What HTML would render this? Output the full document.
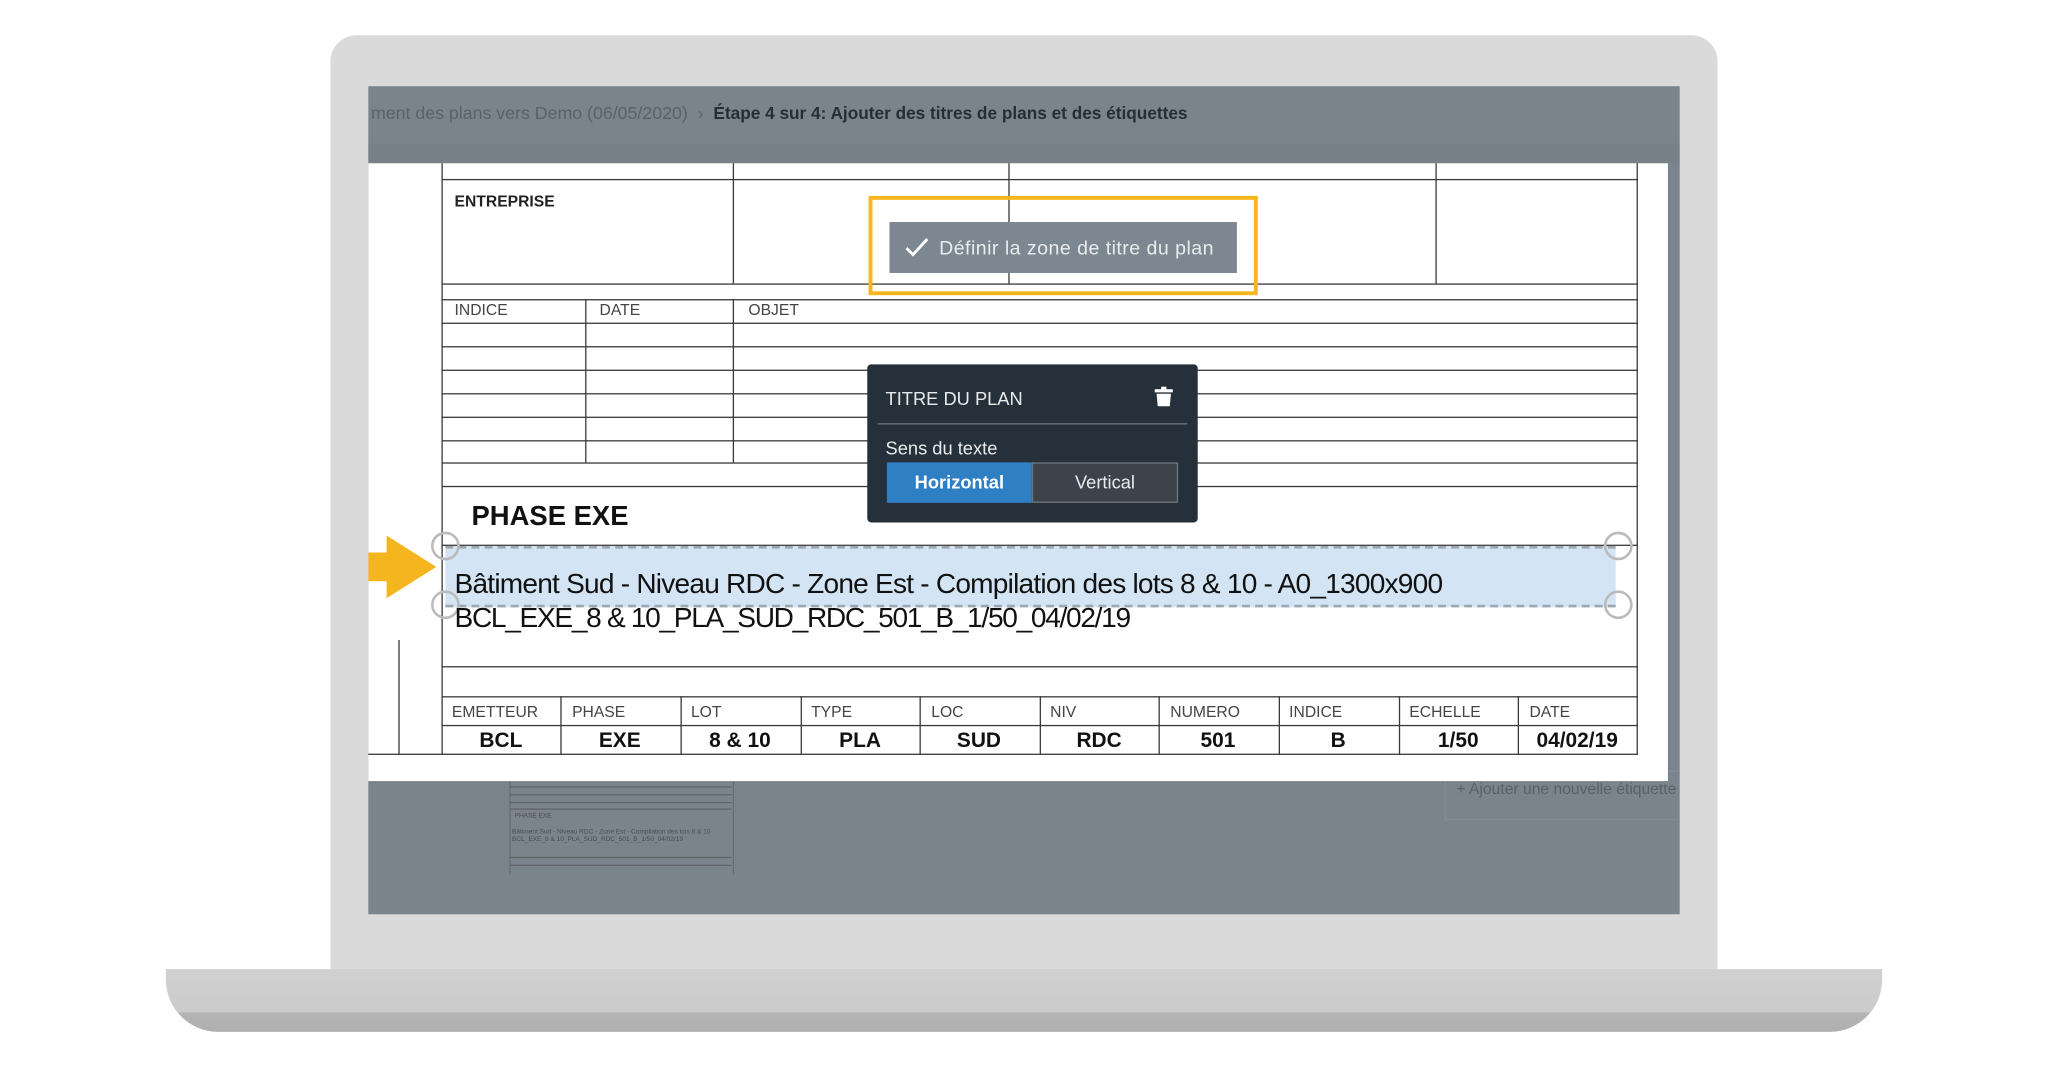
<!DOCTYPE html>
<html><head><meta charset="utf-8"><style>
html,body{margin:0;padding:0;background:#fff;width:2048px;height:1067px;overflow:hidden}
#w{position:absolute;left:0;top:0;width:1568px;height:817px;transform:scale(1.30612);transform-origin:0 0;font-family:"Liberation Sans",sans-serif}
.a{position:absolute}
.h{position:absolute;height:1.4px;background:#3a3a3a}
.v{position:absolute;width:1.4px;background:#3a3a3a}
.lbl{position:absolute;font-size:12px;color:#444}
.val{position:absolute;font-size:16px;font-weight:bold;color:#111;text-align:center;width:91px}
</style></head><body><div id="w">
<div class="a" style="left:253px;top:27px;width:1062px;height:716px;background:#dadada;border-radius:20px 20px 0 0"></div>
<div class="a" style="left:127px;top:742px;width:1314px;height:48px;background:linear-gradient(#d0d0d0 0,#cbcbcb 68%,#b4b4b4 70%,#b0b0b0 100%);border-radius:0 0 40px 40px"></div>
<div class="a" style="left:282px;top:66px;width:1004px;height:634px;background:#7b848d;overflow:hidden">
  <div class="a" style="left:0;top:44px;width:1004px;height:15px;background:#78818a"></div>
  <div class="a" style="left:2px;top:13px;font-size:13.6px;white-space:nowrap;color:#59626b">ment des plans vers Demo (06/05/2020) &nbsp;›&nbsp; <span style="color:#252e37;font-weight:bold;font-size:13.2px">Étape 4 sur 4: Ajouter des titres de plans et des étiquettes</span></div>
  <div class="a" style="left:833px;top:531px;font-size:12px;white-space:nowrap;color:#58616a">+ Ajouter une nouvelle étiquette</div>
  <div class="a" style="left:824px;top:524px;width:190px;height:36px;border:1px solid #838b94"></div>
  <div class="a" style="left:108px;top:532px;width:170px;height:72px;opacity:.5">
    <div class="a" style="left:0;top:0;width:170px;height:72px;border-left:1px solid #555;border-right:1px solid #555"></div>
    <div class="a" style="left:0;top:4px;width:170px;height:1px;background:#444"></div>
    <div class="a" style="left:0;top:10px;width:170px;height:1px;background:#444"></div>
    <div class="a" style="left:0;top:16px;width:170px;height:1px;background:#444"></div>
    <div class="a" style="left:0;top:21px;width:170px;height:1px;background:#444"></div>
    <div class="a" style="left:0;top:58px;width:170px;height:1px;background:#444"></div>
    <div class="a" style="left:0;top:64px;width:170px;height:1px;background:#444"></div>
    <div class="a" style="left:4px;top:24px;font-size:5px;color:#111">PHASE EXE</div>
    <div class="a" style="left:2px;top:36px;font-size:5px;color:#111;white-space:nowrap">Bâtiment Sud - Niveau RDC - Zone Est - Compilation des lots 8 &amp; 10<br>BCL_EXE_8 &amp; 10_PLA_SUD_RDC_501_B_1/50_04/02/19</div>
  </div>
</div>
<div class="a" style="left:282px;top:125px;width:995px;height:473px;background:#fff"></div>
<div class="v" style="left:338px;top:125px;height:453px"></div>
<div class="v" style="left:1253px;top:125px;height:453px"></div>
<div class="v" style="left:305px;top:490px;height:88px"></div>
<div class="h" style="left:338px;top:137px;width:916px"></div>
<div class="h" style="left:338px;top:217px;width:916px"></div>
<div class="h" style="left:338px;top:229px;width:916px"></div>
<div class="h" style="left:338px;top:247px;width:916px"></div>
<div class="h" style="left:338px;top:265px;width:916px"></div>
<div class="h" style="left:338px;top:283px;width:916px"></div>
<div class="h" style="left:338px;top:301px;width:916px"></div>
<div class="h" style="left:338px;top:319px;width:916px"></div>
<div class="h" style="left:338px;top:337px;width:916px"></div>
<div class="h" style="left:338px;top:354px;width:916px"></div>
<div class="h" style="left:338px;top:372px;width:916px"></div>
<div class="h" style="left:338px;top:417px;width:916px"></div>
<div class="h" style="left:338px;top:510px;width:916px"></div>
<div class="h" style="left:338px;top:533px;width:916px"></div>
<div class="h" style="left:338px;top:555px;width:916px"></div>
<div class="h" style="left:282px;top:577px;width:972px"></div>
<div class="v" style="left:561px;top:125px;height:92px"></div>
<div class="v" style="left:772px;top:125px;height:92px"></div>
<div class="v" style="left:1099px;top:125px;height:92px"></div>
<div class="v" style="left:448px;top:229px;height:125px"></div>
<div class="v" style="left:561px;top:229px;height:125px"></div>
<div class="v" style="left:429px;top:533px;height:45px"></div>
<div class="v" style="left:521px;top:533px;height:45px"></div>
<div class="v" style="left:613px;top:533px;height:45px"></div>
<div class="v" style="left:704px;top:533px;height:45px"></div>
<div class="v" style="left:796px;top:533px;height:45px"></div>
<div class="v" style="left:887px;top:533px;height:45px"></div>
<div class="v" style="left:979px;top:533px;height:45px"></div>
<div class="v" style="left:1071px;top:533px;height:45px"></div>
<div class="v" style="left:1162px;top:533px;height:45px"></div>
<div class="lbl" style="left:348px;top:147px;font-weight:bold;color:#222">ENTREPRISE</div>
<div class="lbl" style="left:348px;top:230px">INDICE</div>
<div class="lbl" style="left:459px;top:230px">DATE</div>
<div class="lbl" style="left:573px;top:230px">OBJET</div>
<div class="lbl" style="left:346px;top:538px">EMETTEUR</div>
<div class="lbl" style="left:438px;top:538px">PHASE</div>
<div class="lbl" style="left:529px;top:538px">LOT</div>
<div class="lbl" style="left:621px;top:538px">TYPE</div>
<div class="lbl" style="left:713px;top:538px">LOC</div>
<div class="lbl" style="left:804px;top:538px">NIV</div>
<div class="lbl" style="left:896px;top:538px">NUMERO</div>
<div class="lbl" style="left:987px;top:538px">INDICE</div>
<div class="lbl" style="left:1079px;top:538px">ECHELLE</div>
<div class="lbl" style="left:1171px;top:538px">DATE</div>
<div class="val" style="left:338px;top:559px">BCL</div>
<div class="val" style="left:429px;top:559px">EXE</div>
<div class="val" style="left:521px;top:559px">8 &amp; 10</div>
<div class="val" style="left:613px;top:559px">PLA</div>
<div class="val" style="left:704px;top:559px">SUD</div>
<div class="val" style="left:796px;top:559px">RDC</div>
<div class="val" style="left:887px;top:559px">501</div>
<div class="val" style="left:979px;top:559px">B</div>
<div class="val" style="left:1071px;top:559px">1/50</div>
<div class="val" style="left:1162px;top:559px">04/02/19</div>
<div class="a" style="left:361px;top:384px;font-size:21px;font-weight:bold;color:#111">PHASE EXE</div>
<div class="a" style="left:341px;top:418px;width:896px;height:43px;background:#d3e4f4;border:2px dashed #9ea6ae;border-left:none;border-right:none"></div>
<svg class="a" style="left:328px;top:405px" width="925" height="72">
 <g fill="none" stroke="#bbb" stroke-width="2"><circle cx="13" cy="13" r="10"/><circle cx="13" cy="58" r="10"/><circle cx="911" cy="13" r="10"/><circle cx="911" cy="58" r="10"/></g>
</svg>
<div class="a" style="left:348px;top:435px;font-size:21.5px;color:#111;white-space:nowrap;letter-spacing:-0.6px">Bâtiment Sud - Niveau RDC - Zone Est - Compilation des lots 8 &amp; 10 - A0_1300x900</div>
<div class="a" style="left:348px;top:461px;font-size:21.5px;color:#111;white-space:nowrap;letter-spacing:-1px">BCL_EXE_8 &amp; 10_PLA_SUD_RDC_501_B_1/50_04/02/19</div>
<svg class="a" style="left:282px;top:408px" width="56" height="52"><polygon points="0,15 14,15 14,2 52,26 14,50 14,37 0,37" fill="#f5b51e"/></svg>
<div class="a" style="left:665px;top:150px;width:292px;height:70px;border:3px solid #f5b71c"></div>
<div class="a" style="left:681px;top:170px;width:266px;height:39px;background:#7d8791"></div>
<svg class="a" style="left:692px;top:181px" width="20" height="17"><path d="M2 9 L7 14 L18 2" fill="none" stroke="#fff" stroke-width="2.2"/></svg>
<div class="a" style="left:719px;top:182px;font-size:15px;letter-spacing:0.35px;color:#e9ecee;white-space:nowrap">Définir la zone de titre du plan</div>
<div class="a" style="left:664px;top:279px;width:253px;height:121px;background:#25303a;border-radius:3px">
  <div class="a" style="left:14px;top:18px;font-size:14px;color:#e8ebee">TITRE DU PLAN</div>
  <svg class="a" style="left:220px;top:17px" width="14" height="16"><rect x="0" y="2" width="14" height="2.4" fill="#fff"/><rect x="5" y="0" width="4" height="3" fill="#fff"/><path d="M1.5 5.5 H12.5 L11.6 15 H2.4 Z" fill="#fff"/></svg>
  <div class="a" style="left:8px;top:45px;width:237px;height:1px;background:#6b757f"></div>
  <div class="a" style="left:14px;top:56px;font-size:14px;color:#e8ebee">Sens du texte</div>
  <div class="a" style="left:15px;top:75px;width:111px;height:31px;background:#2e7fc4;color:#fff;font-weight:bold;font-size:14px;text-align:center;line-height:31px">Horizontal</div>
  <div class="a" style="left:126px;top:75px;width:110px;height:29px;background:#3c434a;border:1px solid #6c757e;color:#e8ebee;font-size:14px;text-align:center;line-height:29px">Vertical</div>
</div>
</div></body></html>
